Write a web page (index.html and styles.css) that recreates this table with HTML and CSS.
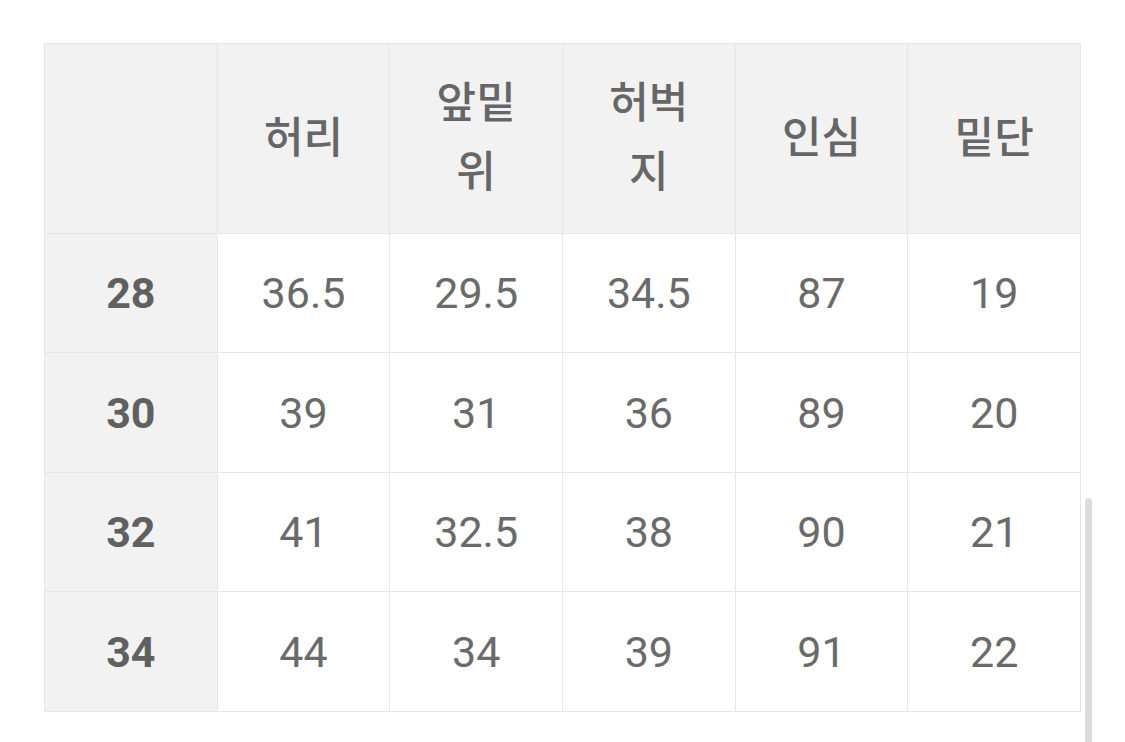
FILE: index.html
```html
<!DOCTYPE html>
<html lang="ko">
<head>
<meta charset="utf-8">
<link rel="stylesheet" href="styles.css">
</head>
<body>
<div class="wrap">
  <table class="size-table">
    <thead>
      <tr>
        <th></th>
        <th>허리</th>
        <th>앞밑<br>위</th>
        <th>허벅<br>지</th>
        <th>인심</th>
        <th>밑단</th>
      </tr>
    </thead>
    <tbody>
      <tr class="r-a"><th>28</th><td>36.5</td><td>29.5</td><td>34.5</td><td>87</td><td>19</td></tr>
      <tr class="r-b"><th>30</th><td>39</td><td>31</td><td>36</td><td>89</td><td>20</td></tr>
      <tr class="r-a"><th>32</th><td>41</td><td>32.5</td><td>38</td><td>90</td><td>21</td></tr>
      <tr class="r-b"><th>34</th><td>44</td><td>34</td><td>39</td><td>91</td><td>22</td></tr>
    </tbody>
  </table>
</div>
<div class="scrollbar"></div>
</body>
</html>
```
FILE: styles.css
```css
html, body {
  margin: 0;
  padding: 0;
  background: #ffffff;
  height: 100%;
  overflow: hidden;
}
body {
  font-family: Roboto, "Noto Sans CJK KR", sans-serif;
  color: #6a6a6a;
}
.wrap {
  padding: 43px 0 0 44px;
}
.size-table {
  border-collapse: collapse;
  table-layout: fixed;
  width: 1037px;
}
.size-table th,
.size-table td {
  border: 1px solid #e6e6e6;
  text-align: center;
  vertical-align: middle;
  padding: 0;
  font-size: 43px;
  width: 16.66%;
}
.size-table thead th {
  background: #f2f2f2;
  height: 180px;
  padding-bottom: 9px;
  font-family: "Noto Sans CJK KR", sans-serif;
  font-weight: 500;
  line-height: 69px;
  color: #666666;
  font-size: 43px;
}
.size-table tbody th {
  background: #f2f2f2;
  font-weight: 700;
  color: #606060;
}
.size-table tbody td {
  background: #ffffff;
  font-weight: 400;
  color: #6a6a6a;
}
.size-table .r-a th,
.size-table .r-a td {
  height: 118px;
}
.size-table .r-b th,
.size-table .r-b td {
  height: 119px;
}
.scrollbar {
  position: absolute;
  left: 1085px;
  top: 498px;
  width: 7px;
  height: 260px;
  background: #dcdcdc;
  border-radius: 4px 4px 0 0;
}
```
